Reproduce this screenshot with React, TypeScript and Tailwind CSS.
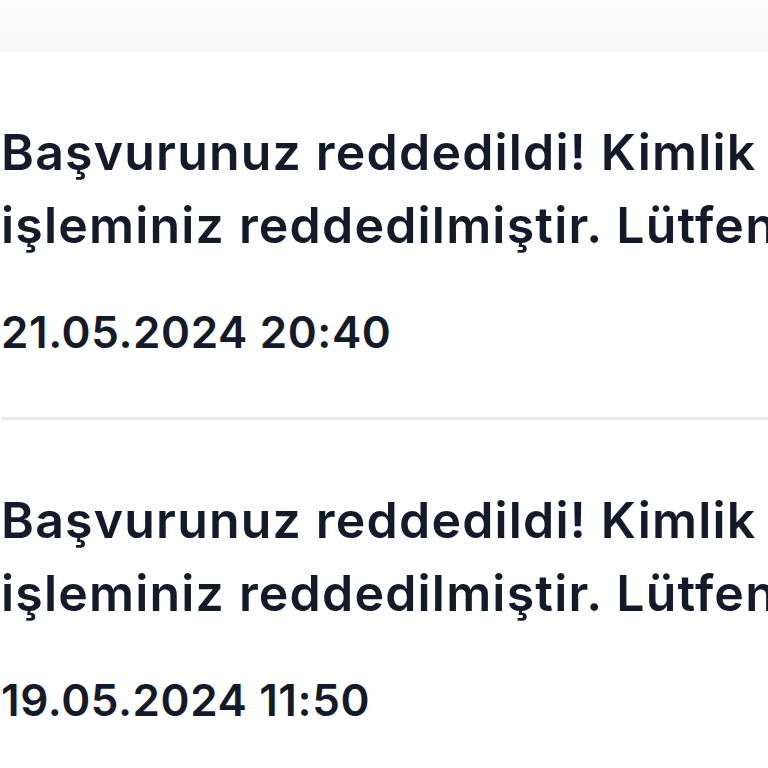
import React from 'react';

type Notice = {
  id: number;
  lines: string[];
  date: string;
};

const notices: Notice[] = [
  {
    id: 1,
    lines: ['Başvurunuz reddedildi! Kimlik', 'işleminiz reddedilmiştir. Lütfen'],
    date: '21.05.2024 20:40',
  },
  {
    id: 2,
    lines: ['Başvurunuz reddedildi! Kimlik', 'işleminiz reddedilmiştir. Lütfen'],
    date: '19.05.2024 11:50',
  },
];

// --- Notification row ---
const NoticeItem: React.FC<{ notice: Notice; last: boolean }> = ({ notice, last }) => (
  <li className={`pt-[64px] pb-[60px] ${last ? '' : 'border-b-[3px] border-[#ebebeb]'}`}>
    <div className="text-[50px] leading-[73px] font-semibold tracking-[1.2px] text-[#131a2a]">
      {notice.lines.map((line) => (
        <p key={line} className="whitespace-nowrap">
          {line}
        </p>
      ))}
    </div>
    <p className="mt-[45px] text-[44px] leading-[50px] font-semibold tracking-[0.6px] text-[#131a2a] whitespace-nowrap">
      {notice.date}
    </p>
  </li>
);

export default function App() {
  return (
    <div
      className="w-[768px] h-[768px] overflow-hidden bg-white"
      style={{ fontFamily: 'Inter, "Noto Sans", sans-serif' }}
    >
      <div className="h-[52px] bg-gradient-to-b from-[#fefefe] to-[#f7f7f7]" />
      <ul className="pl-[1px]">
        {notices.map((n, i) => (
          <NoticeItem key={n.id} notice={n} last={i === notices.length - 1} />
        ))}
      </ul>
    </div>
  );
}
